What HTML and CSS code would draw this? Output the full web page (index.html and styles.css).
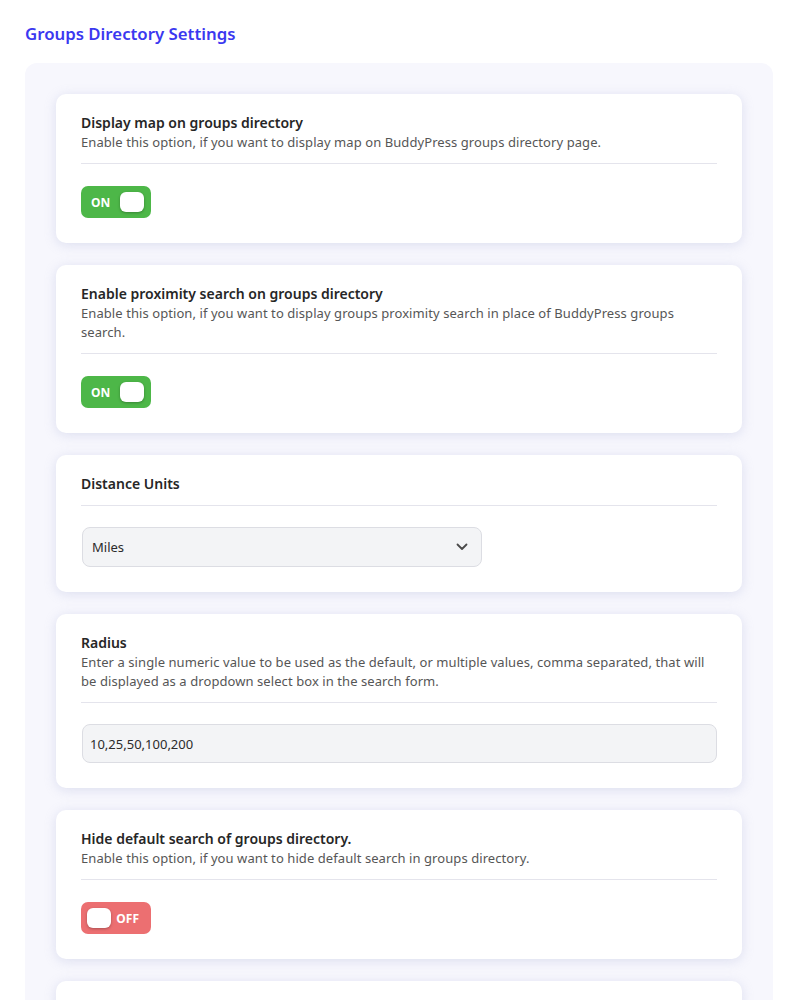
FILE: index.html
```html
<!DOCTYPE html>
<html lang="en">
<head>
<meta charset="utf-8">
<title>Groups Directory Settings</title>
<link rel="stylesheet" href="styles.css">
</head>
<body>
<div class="page">
  <h1 class="page-title">Groups Directory Settings</h1>
  <div class="panel">
    <section class="card">
      <div class="card-head">
        <h2 class="card-title">Display map on groups directory</h2>
        <p class="card-desc">Enable this option, if you want to display map on BuddyPress groups directory page.</p>
      </div>
      <div class="card-body">
        <label class="toggle toggle-on"><span class="toggle-label">ON</span><span class="knob"></span></label>
      </div>
    </section>
    <section class="card">
      <div class="card-head">
        <h2 class="card-title">Enable proximity search on groups directory</h2>
        <p class="card-desc">Enable this option, if you want to display groups proximity search in place of BuddyPress groups search.</p>
      </div>
      <div class="card-body">
        <label class="toggle toggle-on"><span class="toggle-label">ON</span><span class="knob"></span></label>
      </div>
    </section>
    <section class="card">
      <div class="card-head">
        <h2 class="card-title">Distance Units</h2>
      </div>
      <div class="card-body">
        <div class="select">
          <span class="select-value">Miles</span>
          <svg class="chevron" width="12" height="8" viewBox="0 0 12 8"><path d="M1.5 1.5 L6 6 L10.5 1.5" fill="none" stroke="#4a4a4a" stroke-width="1.8" stroke-linecap="round" stroke-linejoin="round"/></svg>
        </div>
      </div>
    </section>
    <section class="card">
      <div class="card-head">
        <h2 class="card-title">Radius</h2>
        <p class="card-desc">Enter a single numeric value to be used as the default, or multiple values, comma separated, that will be displayed as a dropdown select box in the search form.</p>
      </div>
      <div class="card-body">
        <div class="input">10,25,50,100,200</div>
      </div>
    </section>
    <section class="card">
      <div class="card-head">
        <h2 class="card-title">Hide default search of groups directory.</h2>
        <p class="card-desc">Enable this option, if you want to hide default search in groups directory.</p>
      </div>
      <div class="card-body">
        <label class="toggle toggle-off"><span class="knob"></span><span class="toggle-label">OFF</span></label>
      </div>
    </section>
    <section class="card card-placeholder"></section>
  </div>
</div>
</body>
</html>
```
FILE: styles.css
```css
* { box-sizing: border-box; }
html, body { margin: 0; padding: 0; background: #ffffff; }
body {
  font-family: "Noto Sans", "Open Sans", "Liberation Sans", sans-serif;
  color: #2b2b2b;
}
.page { padding: 22px 25px 0 25px; width: 800px; overflow: hidden; }
.page-title {
  margin: 0 0 17px 0;
  font-size: 16.8px;
  line-height: 24px;
  font-weight: 600;
  color: #3b38f0;
}
.panel {
  width: 748px;
  background: #f7f7fd;
  border-radius: 12px;
  padding: 31px 31px 30px 31px;
  display: flex;
  flex-direction: column;
  gap: 22px;
}
.card {
  background: #ffffff;
  border-radius: 10px;
  padding: 19px 25px 25px 25px;
  box-shadow: 0 2px 12px rgba(160, 165, 210, 0.3);
}
.card-placeholder { min-height: 150px; }
.card-head {
  border-bottom: 1px solid #e4e4ec;
  padding-bottom: 11px;
}
.card-title {
  margin: 0;
  font-size: 14px;
  line-height: 20px;
  font-weight: 600;
  color: #262626;
}
.card-desc {
  margin: 0;
  font-size: 13px;
  line-height: 19px;
  letter-spacing: 0.075px;
  color: #565656;
}
.card-body { padding-top: 21px; }
.toggle {
  display: inline-flex;
  align-items: center;
  width: 70px;
  height: 32px;
  margin-top: 1px;
  border-radius: 7px;
  padding: 0 7px 0 10px;
  justify-content: space-between;
  color: #ffffff;
  font-size: 12px;
  font-weight: 700;
  vertical-align: top;
}
.toggle-on { background: #4db748; }
.toggle-off { background: #ec6f71; padding: 0 12px 0 6px; }
.knob {
  width: 24px;
  height: 20px;
  background: #ffffff;
  border-radius: 6px;
  box-shadow: 0 1px 3px rgba(0, 0, 0, 0.28);
}
.select {
  width: 400px;
  height: 40px;
  margin-left: 1px;
  background: #f3f4f6;
  border: 1px solid #dcdde3;
  border-radius: 8px;
  display: flex;
  align-items: center;
  justify-content: space-between;
  padding: 0 13px 0 9px;
  font-size: 13px;
  color: #2b2b2b;
}
.input {
  height: 39px;
  margin-left: 1px;
  background: #f3f4f6;
  border: 1px solid #dcdde3;
  border-radius: 8px;
  display: flex;
  align-items: center;
  padding: 0 7px;
  font-size: 13px;
  color: #2b2b2b;
}
```
